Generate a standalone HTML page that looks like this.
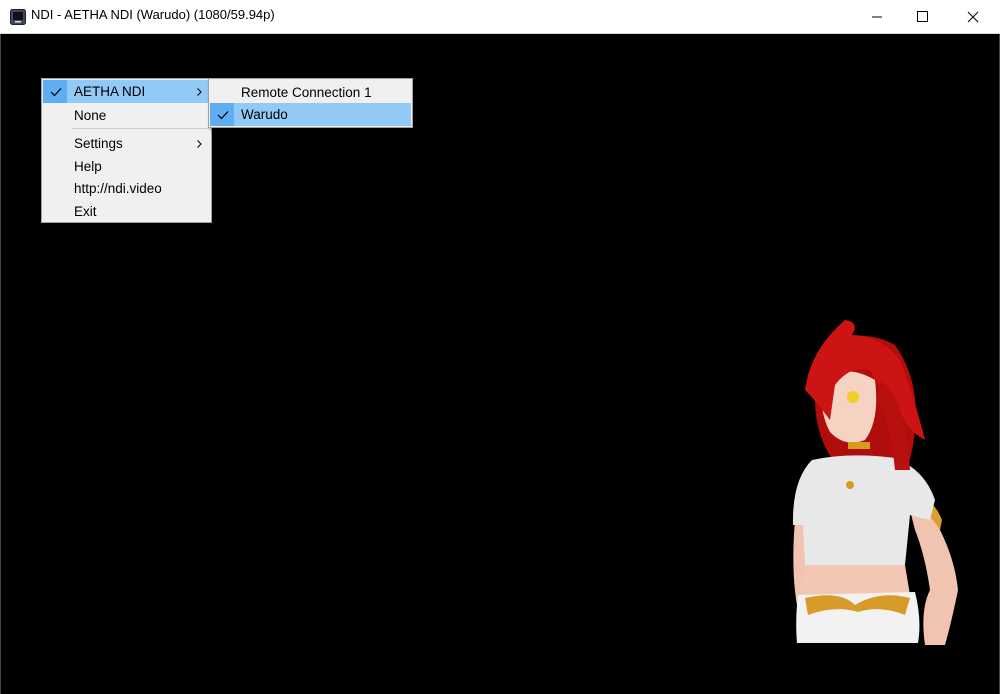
<!DOCTYPE html>
<html><head><meta charset="utf-8"><style>
html,body{margin:0;padding:0;width:1000px;height:694px;overflow:hidden;background:#000;font-family:"Segoe UI","Liberation Sans",sans-serif}
#title{position:absolute;left:0;top:0;width:1000px;height:33px;background:#fff;border-bottom:1px solid #d8d8d8}
#title .t{position:absolute;left:31px;top:7px;font-size:13px;color:#000}
.menu{position:absolute;background:#f0f0f0;border:1px solid #a0a0a0;box-shadow:2px 2px 3px rgba(0,0,0,.4);font-size:13.5px;color:#000}
.it{position:absolute;left:1px;right:1px;height:23px;line-height:24px}
.it span{position:absolute;left:31px}
.hl{background:#91c9f7}
.chk{position:absolute;left:0;top:0;width:24px;height:23px;background:#60aef2}
.arr{position:absolute;right:8px;top:8px}
</style></head><body>
<div id="title">
<svg style="position:absolute;left:10px;top:9px" width="16" height="16" viewBox="0 0 16 16"><rect x="0.5" y="0.5" width="15" height="15" rx="2" fill="#3b4a6b" stroke="#222"/><rect x="3" y="3" width="10" height="8" fill="#111"/><rect x="5" y="12" width="6" height="1.5" fill="#ddd"/></svg>
<div class="t">NDI - AETHA NDI (Warudo) (1080/59.94p)</div>
<svg style="position:absolute;left:860px;top:8px" width="130" height="18"><line x1="12" y1="9" x2="22" y2="9" stroke="#000"/><rect x="57.5" y="3.5" width="10" height="10" fill="none" stroke="#000"/><path d="M108 4 L118 14 M118 4 L108 14" stroke="#000"/></svg>
</div>
<div style="position:absolute;left:0;top:34px;width:1px;height:660px;background:#444"></div>
<div style="position:absolute;right:0;top:34px;width:1px;height:660px;background:#444"></div>

<div class="menu" style="left:41px;top:78px;width:169px;height:143px">
 <div class="it hl" style="top:1px"><div class="chk"></div><svg style="position:absolute;left:7px;top:7px" width="12" height="10"><path d="M1 5 L4.5 8.5 L11 1.5" stroke="#000" fill="none" stroke-width="1.2"/></svg><span>AETHA NDI</span><svg class="arr" width="5" height="8"><path d="M0.5 0.5 L4 4 L0.5 7.5" stroke="#000" fill="none"/></svg></div>
 <div class="it" style="top:25px"><span>None</span></div>
 <div style="position:absolute;left:30px;right:2px;top:49px;height:1px;background:#d0d0d0"></div>
 <div class="it" style="top:53px"><span>Settings</span><svg class="arr" width="5" height="8"><path d="M0.5 0.5 L4 4 L0.5 7.5" stroke="#000" fill="none"/></svg></div>
 <div class="it" style="top:76px"><span>Help</span></div>
 <div class="it" style="top:98px"><span>http://ndi.video</span></div>
 <div class="it" style="top:121px"><span>Exit</span></div>
</div>
<div class="menu" style="left:208px;top:78px;width:203px;height:48px">
 <div class="it" style="top:2px"><span>Remote Connection 1</span></div>
 <div class="it hl" style="top:24px"><div class="chk"></div><svg style="position:absolute;left:7px;top:7px" width="12" height="10"><path d="M1 5 L4.5 8.5 L11 1.5" stroke="#000" fill="none" stroke-width="1.2"/></svg><span>Warudo</span></div>
</div>

<svg style="position:absolute;left:0;top:0" width="1000" height="694">
<path d="M830 350 Q860 325 895 345 Q920 380 915 430 Q912 460 905 470 L840 470 Q815 440 815 400 Z" fill="#b00d0d"/>
<path d="M905 490 Q930 500 940 530 Q955 560 958 590 Q952 620 945 645 L925 645 Q920 610 930 590 Q925 555 915 530 Z" fill="#f0c4b0"/>
<path d="M908 505 Q930 490 942 520 L940 530 Q925 505 910 515 Z" fill="#d8a030"/>
<path d="M795 520 Q790 580 800 620 Q795 640 810 640 L815 600 Q808 560 812 520 Z" fill="#f0c4b0"/>
<path d="M812 460 Q850 452 895 458 Q925 470 935 500 L930 520 L910 515 L905 565 Q860 570 805 565 L803 525 L793 525 Q792 480 812 460 Z" fill="#e8e8e8"/>
<path d="M805 565 L905 565 L910 595 L800 595 Z" fill="#f2c8b4"/>
<path d="M798 595 L915 592 Q922 620 918 643 L797 643 Q795 620 798 595 Z" fill="#f2f2f2"/>
<path d="M805 598 Q840 590 855 605 Q880 590 910 598 L905 615 Q880 605 858 612 Q835 605 808 615 Z" fill="#d89a28"/>
<path d="M822 375 Q850 365 875 380 Q880 420 865 440 Q845 448 830 432 Q818 410 822 375 Z" fill="#f5d2c2"/>
<path d="M848 442 L870 442 L870 449 L848 449 Z" fill="#d99a20"/>
<circle cx="850" cy="485" r="4" fill="#d99a20"/>
<circle cx="853" cy="397" r="6" fill="#f0d020"/><circle cx="828" cy="395" r="4" fill="#f0d020"/>
<path d="M845 320 Q860 322 852 335 Q880 335 900 360 Q915 400 925 440 Q905 430 895 400 Q880 390 870 370 Q850 365 835 385 L830 420 Q815 400 805 390 Q810 350 845 320 Z" fill="#cc1414"/>
<path d="M880 380 Q905 395 910 470 L895 470 Q890 420 878 400 Z" fill="#b80f0f"/>
</svg>
</body></html>
